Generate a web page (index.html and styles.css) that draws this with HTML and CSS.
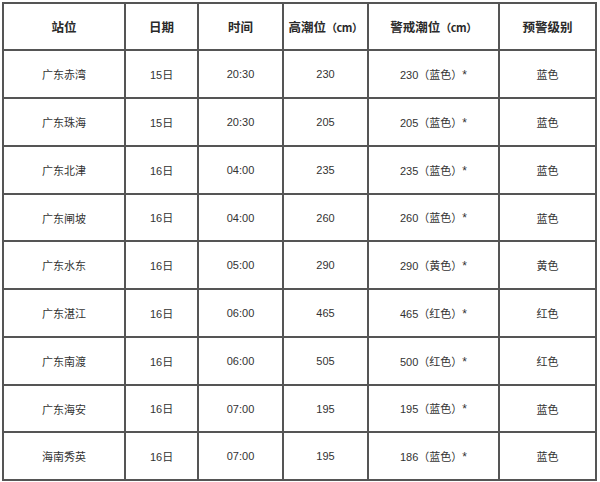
FILE: index.html
```html
<!DOCTYPE html>
<html lang="zh-CN">
<head>
<meta charset="utf-8">
<title>潮位预警</title>
<link rel="stylesheet" href="styles.css">
</head>
<body>
<table class="tide">
  <colgroup>
    <col class="c1"><col class="c2"><col class="c3"><col class="c4"><col class="c5"><col class="c6">
  </colgroup>
  <thead>
    <tr class="r47">
      <th>站位</th><th>日期</th><th>时间</th><th>高潮位<span class="unit">（cm）</span></th><th>警戒潮位<span class="unit">（cm）</span></th><th>预警级别</th>
    </tr>
  </thead>
  <tbody>
    <tr class="r48"><td>广东赤湾</td><td><span class="num">15</span>日</td><td class="num">20:30</td><td class="num">230</td><td><span class="num">230</span>（蓝色）<span class="star">*</span></td><td>蓝色</td></tr>
    <tr class="r48"><td>广东珠海</td><td><span class="num">15</span>日</td><td class="num">20:30</td><td class="num">205</td><td><span class="num">205</span>（蓝色）<span class="star">*</span></td><td>蓝色</td></tr>
    <tr class="r48"><td>广东北津</td><td><span class="num">16</span>日</td><td class="num">04:00</td><td class="num">235</td><td><span class="num">235</span>（蓝色）<span class="star">*</span></td><td>蓝色</td></tr>
    <tr class="r47"><td>广东闸坡</td><td><span class="num">16</span>日</td><td class="num">04:00</td><td class="num">260</td><td><span class="num">260</span>（蓝色）<span class="star">*</span></td><td>蓝色</td></tr>
    <tr class="r48"><td>广东水东</td><td><span class="num">16</span>日</td><td class="num">05:00</td><td class="num">290</td><td><span class="num">290</span>（黄色）<span class="star">*</span></td><td>黄色</td></tr>
    <tr class="r48"><td>广东湛江</td><td><span class="num">16</span>日</td><td class="num">06:00</td><td class="num">465</td><td><span class="num">465</span>（红色）<span class="star">*</span></td><td>红色</td></tr>
    <tr class="r48"><td>广东南渡</td><td><span class="num">16</span>日</td><td class="num">06:00</td><td class="num">505</td><td><span class="num">500</span>（红色）<span class="star">*</span></td><td>红色</td></tr>
    <tr class="r47"><td>广东海安</td><td><span class="num">16</span>日</td><td class="num">07:00</td><td class="num">195</td><td><span class="num">195</span>（蓝色）<span class="star">*</span></td><td>蓝色</td></tr>
    <tr class="r48"><td>海南秀英</td><td><span class="num">16</span>日</td><td class="num">07:00</td><td class="num">195</td><td><span class="num">186</span>（蓝色）<span class="star">*</span></td><td>蓝色</td></tr>
  </tbody>
</table>
</body>
</html>
```

FILE: styles.css
```css
html, body {
  margin: 0;
  padding: 0;
  background: #fff;
}

body {
  padding: 2px 0 0 2px;
  font-family: "Noto Sans CJK SC", "Liberation Sans", sans-serif;
  color: #333;
}

.tide {
  border-collapse: separate;
  border-spacing: 0;
  table-layout: fixed;
  width: 595px;
  border-top: 2px solid #555;
  border-left: 2px solid #555;
}

.c1 { width: 122px; }
.c2 { width: 73px; }
.c3 { width: 85px; }
.c4 { width: 85px; }
.c5 { width: 131px; }
.c6 { width: 97px; }

.tide th,
.tide td {
  box-sizing: border-box;
  border-right: 2px solid #555;
  border-bottom: 2px solid #555;
  padding: 0;
  text-align: center;
  vertical-align: middle;
  white-space: nowrap;
  line-height: 14px;
}

.tide th {
  font-size: 12.5px;
  font-weight: bold;
  color: #2a2a2a;
}

.tide td {
  font-size: 11px;
  color: #333;
}

.r47 { height: 47px; }
.r48 { height: 48px; }

.unit {
  font-size: 11px;
  letter-spacing: -0.5px;
}

.num {
  font-family: "Liberation Sans", sans-serif;
  font-size: 11px;
}

.star {
  font-family: "Liberation Sans", sans-serif;
  font-size: 12px;
}
```
